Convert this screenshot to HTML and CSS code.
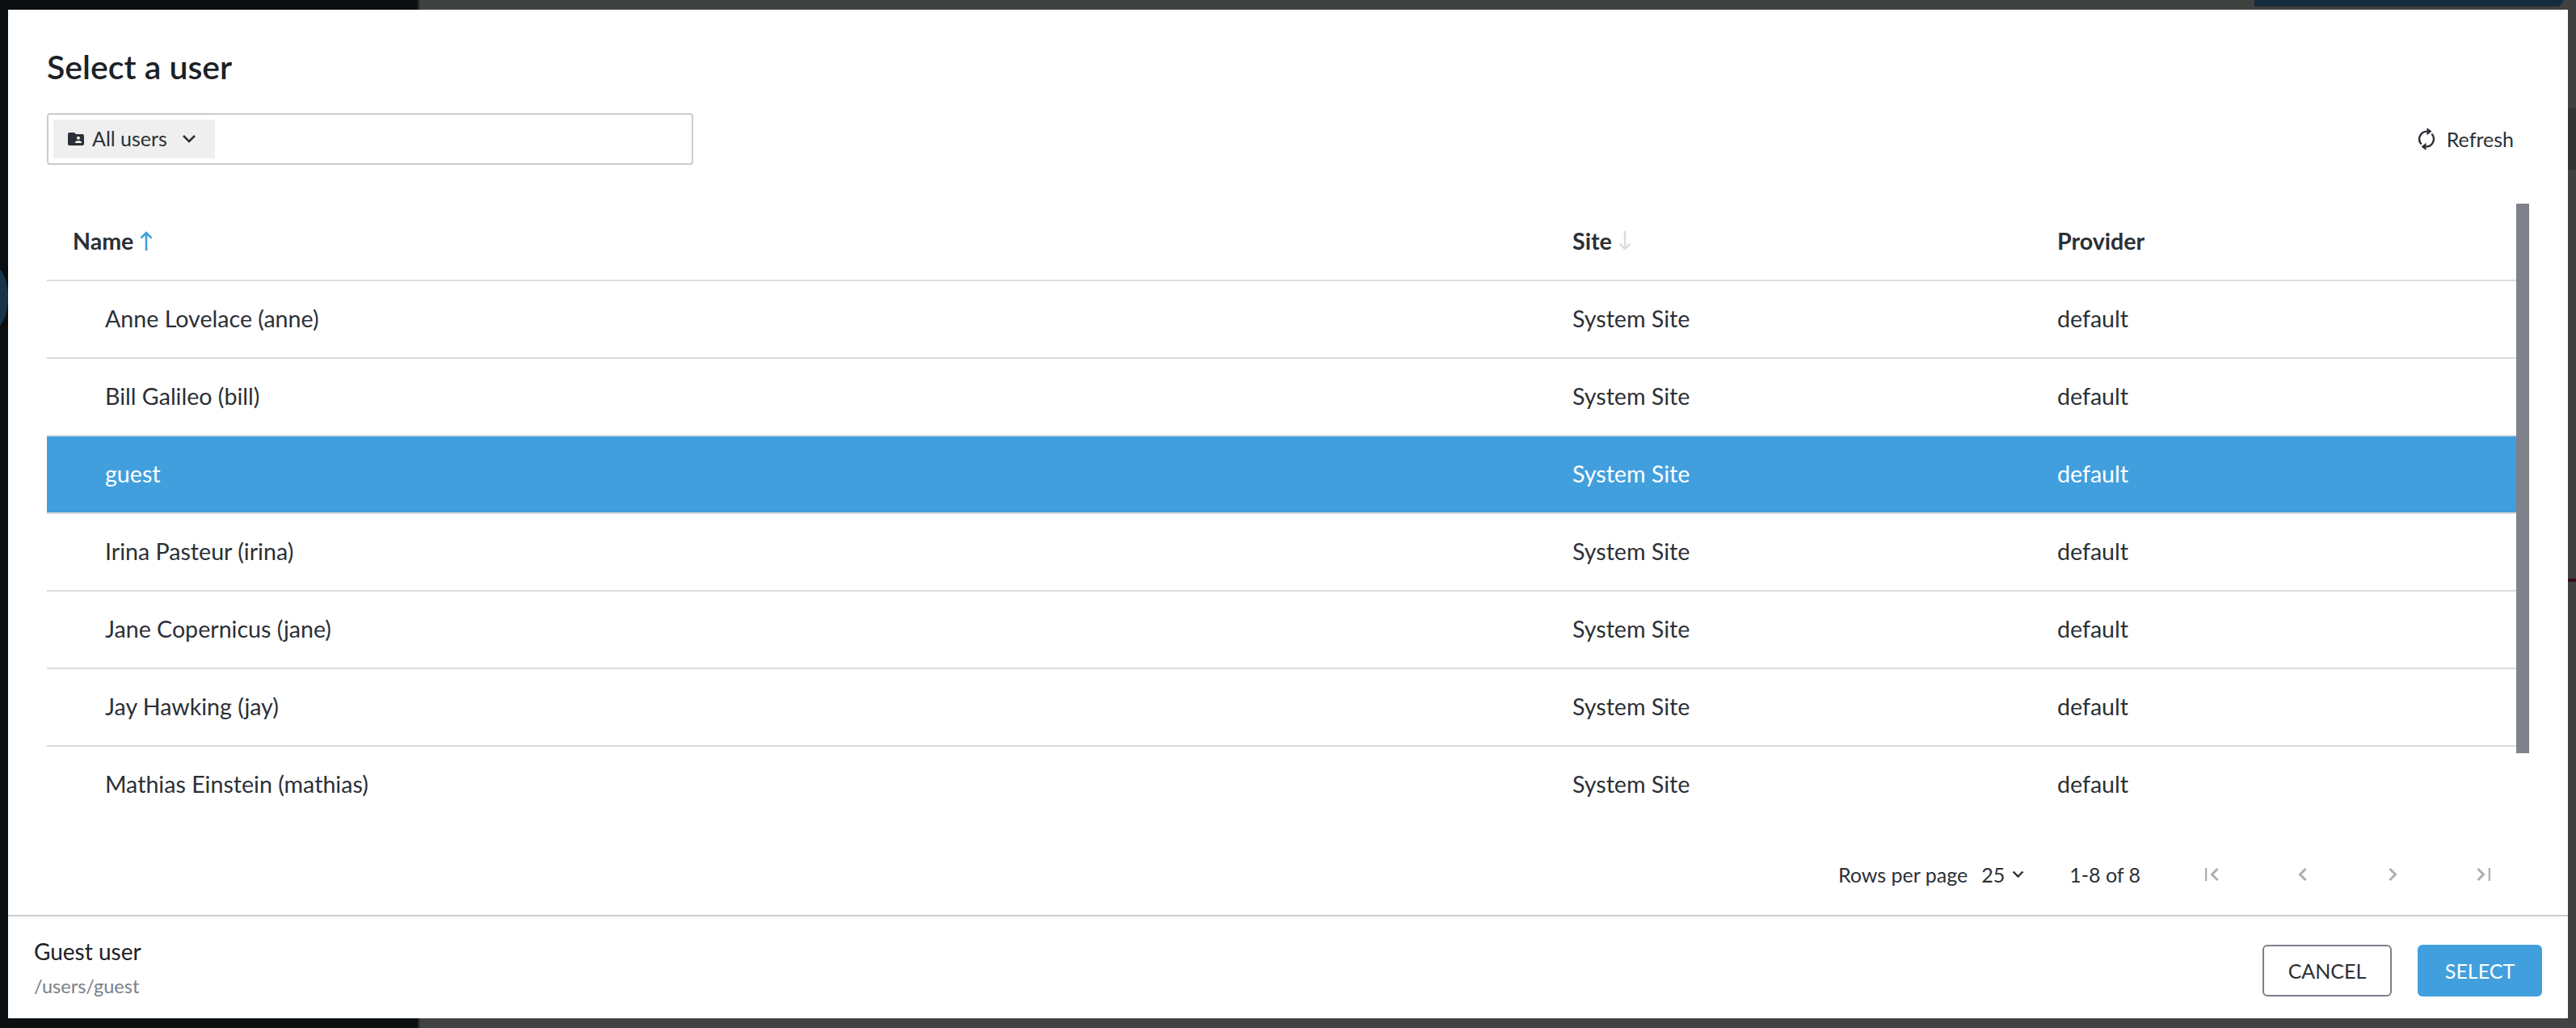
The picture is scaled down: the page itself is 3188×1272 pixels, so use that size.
FILE: index.html
```html
<!DOCTYPE html>
<html lang="en">
<head>
<meta charset="utf-8">
<title>Select a user</title>
<link rel="stylesheet" href="styles.css">
</head>
<body>
<div class="backdrop">
  <div class="bd-navy"></div>
  <div class="bd-bubble"></div>
  <div class="bd-red"></div>
  <div class="bd-band bd-band-a"></div>
</div>
<main class="modal">
  <h1 class="title">Select a user</h1>
  <div class="toolbar">
    <div class="search">
      <div class="chip">
        <svg class="folder" viewBox="2 4 20 16"><path d="M20 6h-8l-2-2H4c-1.1 0-2 .9-2 2v12c0 1.1.9 2 2 2h16c1.1 0 2-.9 2-2V8c0-1.1-.9-2-2-2zm-5 2.8c1.1 0 2 .9 2 2s-.9 2-2 2-2-.9-2-2 .9-2 2-2zm4 8.2h-8v-1c0-1.33 2.67-2 4-2s4 .67 4 2v1z" fill="currentColor"/></svg>
        <span class="chip-label">All users</span>
        <svg class="chev" viewBox="0 0 18 12"><path d="M2 2l7 7 7-7" fill="none" stroke="currentColor" stroke-width="2.6"/></svg>
      </div>
    </div>
    <div class="refresh">
      <svg class="refresh-icon" viewBox="0 0 22 28"><g fill="none" stroke="currentColor" stroke-width="2.4"><path d="M12 4.6A9.5 9.5 0 0 0 4.6 20.5"/><path d="M10 23.4A9.5 9.5 0 0 0 17.4 7.5"/></g><path d="M11.5 0l6 4.6-6 4.6zM10.500 18.800l-6 4.600 6 4.600z" fill="currentColor"/></svg>
      <span>Refresh</span>
    </div>
  </div>
  <div class="table-wrap">
    <div class="thumb"></div>
    <div class="row head">
      <div class="c-name">Name<svg class="sort" viewBox="0 0 16 24"><path d="M8 24V2M1.500 8.500L8 2l6.500 6.500" fill="none" stroke="#429fdd" stroke-width="2.6"/></svg></div>
      <div class="c-site">Site<svg class="sort" viewBox="0 0 16 24"><path d="M8 0v22M1.500 15.500L8 22l6.500-6.500" fill="none" stroke="#ddd" stroke-width="2.6"/></svg></div>
      <div class="c-prov">Provider</div>
    </div>
    <div class="row"><div class="c-name indent">Anne Lovelace (anne)</div><div class="c-site">System Site</div><div class="c-prov">default</div></div>
    <div class="row"><div class="c-name indent">Bill Galileo (bill)</div><div class="c-site">System Site</div><div class="c-prov">default</div></div>
    <div class="row selected"><div class="c-name indent">guest</div><div class="c-site">System Site</div><div class="c-prov">default</div></div>
    <div class="row"><div class="c-name indent">Irina Pasteur (irina)</div><div class="c-site">System Site</div><div class="c-prov">default</div></div>
    <div class="row"><div class="c-name indent">Jane Copernicus (jane)</div><div class="c-site">System Site</div><div class="c-prov">default</div></div>
    <div class="row"><div class="c-name indent">Jay Hawking (jay)</div><div class="c-site">System Site</div><div class="c-prov">default</div></div>
    <div class="row"><div class="c-name indent">Mathias Einstein (mathias)</div><div class="c-site">System Site</div><div class="c-prov">default</div></div>
  </div>
  <div class="pager">
    <span class="rpp">Rows per page</span>
    <span class="rpp-val">25</span>
    <svg class="rpp-chev" viewBox="0 0 15 10"><path d="M1.500 1.500l6 6 6-6" fill="none" stroke="currentColor" stroke-width="2.4"/></svg>
    <span class="range">1-8 of 8</span>
    <div class="pager-icons">
      <svg class="pi" viewBox="0 0 17 16"><path d="M1 0v16" stroke-width="2.600"/><path d="M15.500 1l-7 7 7 7"/></svg>
      <svg class="pi" viewBox="0 0 17 16"><path d="M12.500 1l-7 7 7 7"/></svg>
      <svg class="pi" viewBox="0 0 17 16"><path d="M4.500 1l7 7-7 7"/></svg>
      <svg class="pi" viewBox="0 0 17 16"><path d="M1.500 1l7 7-7 7"/><path d="M16 0v16" stroke-width="2.600"/></svg>
    </div>
  </div>
  <footer class="footer">
    <div class="selection">
      <div class="sel-name">Guest user</div>
      <div class="sel-path">/users/guest</div>
    </div>
    <div class="actions">
      <button class="btn btn-cancel">CANCEL</button>
      <button class="btn btn-select">SELECT</button>
    </div>
  </footer>
</main>
</body>
</html>
```

FILE: styles.css
```css
* { box-sizing: border-box; }
html, body { margin: 0; height: 1272px; overflow: hidden; }
body {
  position: relative;
  padding: 12px 10px;
  background: linear-gradient(90deg, #0b0e11 0, #0b0e11 516px, #404141 520px, #404141 100%);
  font-family: "Lato", "Noto Sans", sans-serif;
  color: #2b3036;
}
.backdrop { position: absolute; inset: 0; }
.bd-navy { position: absolute; left: 2790px; top: 0; width: 382px; height: 8px; background: #142c3d; border-bottom-right-radius: 8px; }
.bd-bubble { position: absolute; left: -24px; top: 330px; width: 34px; height: 76px; border-radius: 50%; background: #17344a; }
.bd-red { position: absolute; left: 3178px; top: 716px; width: 10px; height: 4px; background: #3a0d18; }
.bd-band { position: absolute; left: 3178px; width: 10px; background: #333; }
.bd-band-a { top: 134px; height: 76px; }
.modal {
  position: relative;
  width: 3168px;
  height: 1248px;
  background: #fff;
  display: flex;
  flex-direction: column;
}
.title {
  margin: 0;
  height: 128px;
  padding: 48px 48px 0;
  font-size: 41px;
  line-height: 46px;
  font-weight: 600;
  color: #1c2126;
}
.toolbar {
  height: 64px;
  margin: 0 67px 0 48px;
  display: flex;
  justify-content: space-between;
  align-items: center;
}
.search {
  width: 800px;
  height: 64px;
  border: 2px solid #cbcbd0;
  border-radius: 4px;
  padding: 6px;
}
.chip {
  width: 200px;
  height: 48px;
  background: #efefef;
  display: flex;
  align-items: center;
  padding-left: 18px;
  color: #2b3036;
}
.folder { width: 20px; height: 16px; flex: none; }
.chip-label { margin-left: 10px; padding-bottom: 2px; font-size: 25px; width: 111px; flex: none; }
.chev { width: 18px; height: 12px; flex: none; }
.refresh { display: flex; align-items: center; gap: 14px; font-size: 25px; }
.refresh-icon { width: 22px; height: 28px; }
.table-wrap {
  position: relative;
  margin: 48px 0 0 48px;
  width: 3072px;
  height: 758px;
  overflow: hidden;
}
.thumb { position: absolute; right: 0; top: 0; width: 16px; height: 680px; background: #7f828a; z-index: 2; }
.row {
  display: grid;
  grid-template-columns: 1856px 600px 1fr;
  align-items: center;
  height: 96px;
  padding: 0 0 2px 32px;
  border-bottom: 2px solid #dcdcdc;
  font-size: 28.6px;
}
.row.head { font-weight: 700; }
.row.selected { background: #429fdd; color: #fff; }
.indent { padding-left: 40px; }
.c-name, .c-site { display: flex; align-items: center; }
.sort { width: 16px; height: 24px; margin-left: 8px; }
.pager {
  height: 122px;
  margin-right: 96px;
  padding-top: 22px;
  display: flex;
  align-items: center;
  justify-content: flex-end;
  font-size: 25px;
}
.rpp-val { margin-left: 17px; }
.rpp-chev { width: 15px; height: 10px; margin-left: 9px; }
.range { margin-left: 56px; }
.pager-icons { margin-left: 80px; display: flex; gap: 95px; }
.pi { width: 17px; height: 16px; fill: none; stroke: #adafb1; stroke-width: 3; }
.footer {
  flex: 1;
  border-top: 2px solid #cbcbd0;
  display: flex;
  justify-content: space-between;
  align-items: center;
  padding: 0 32px;
}
.sel-name { font-size: 28px; line-height: 36px; color: #1c2126; }
.sel-path { font-size: 23.5px; line-height: 30px; margin-top: 10px; color: #7b7f87; }
.actions { display: flex; gap: 32px; padding-top: 8px; }
.btn {
  height: 64px;
  font: inherit;
  font-size: 25px;
  border-radius: 6px;
  padding: 0;
}
.btn-cancel { width: 160px; background: #fff; color: #2b3036; border: 2px solid #7b7f8a; }
.btn-select { width: 154px; background: #429fdd; color: #fff; border: 0; }
```
